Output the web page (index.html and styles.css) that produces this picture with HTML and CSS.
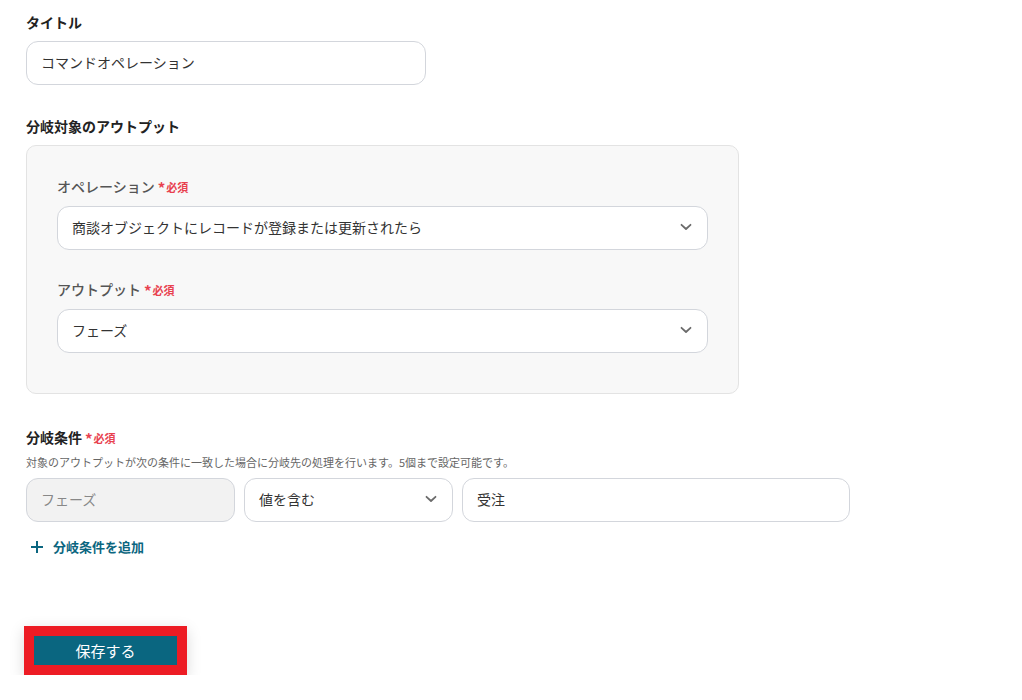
FILE: index.html
```html
<!DOCTYPE html>
<html lang="ja">
<head>
  <meta charset="UTF-8" />
  <meta name="viewport" content="width=device-width, initial-scale=1.0" />
  <title>分岐設定</title>
  <link rel="stylesheet" href="styles.css">
</head>
<body>
  <div class="pagina">
    <div class="campo">
      <label class="rotulo">タイトル</label>
      <div class="caixa titulo">コマンドオペレーション</div>
    </div>

    <div class="campo campo-saida">
      <label class="rotulo">分岐対象のアウトプット</label>
      <div class="painel">
        <div class="campo">
          <label class="rotulo-sub">オペレーション<span class="obrigatorio"><span class="ast">*</span>必須</span></label>
          <div class="caixa seletor">
            <span>商談オブジェクトにレコードが登録または更新されたら</span>
            <svg class="seta" width="12" height="8" viewBox="0 0 12 8"><path d="M1.5 1.8 L6 6 L10.5 1.8" fill="none" stroke="#6b6b6b" stroke-width="1.8" stroke-linecap="round" stroke-linejoin="round"/></svg>
          </div>
        </div>
        <div class="campo campo-saida2">
          <label class="rotulo-sub">アウトプット<span class="obrigatorio"><span class="ast">*</span>必須</span></label>
          <div class="caixa seletor">
            <span>フェーズ</span>
            <svg class="seta" width="12" height="8" viewBox="0 0 12 8"><path d="M1.5 1.8 L6 6 L10.5 1.8" fill="none" stroke="#6b6b6b" stroke-width="1.8" stroke-linecap="round" stroke-linejoin="round"/></svg>
          </div>
        </div>
      </div>
    </div>

    <div class="campo campo-condicao">
      <label class="rotulo">分岐条件<span class="obrigatorio"><span class="ast">*</span>必須</span></label>
      <p class="ajuda">対象のアウトプットが次の条件に一致した場合に分岐先の処理を行います。5個まで設定可能です。</p>
      <div class="linha-condicao">
        <div class="caixa desativado">フェーズ</div>
        <div class="caixa seletor">
          <span>値を含む</span>
          <svg class="seta" width="12" height="8" viewBox="0 0 12 8"><path d="M1.5 1.8 L6 6 L10.5 1.8" fill="none" stroke="#6b6b6b" stroke-width="1.8" stroke-linecap="round" stroke-linejoin="round"/></svg>
        </div>
        <div class="caixa valor">受注</div>
      </div>
      <a class="adicionar" href="#">
        <svg width="14" height="14" viewBox="0 0 14 14"><path d="M7 1 V13 M1 7 H13" stroke="#0b6680" stroke-width="2" fill="none"/></svg>
        分岐条件を追加
      </a>
    </div>

    <div class="rodape">
      <div class="destaque">
        <button class="salvar">保存する</button>
      </div>
    </div>
  </div>
</body>
</html>
```

FILE: styles.css
```css
body {
  margin: 0;
  background: #ffffff;
  font-family: "Noto Sans CJK JP", "Noto Sans", sans-serif;
  color: #333;
}
.pagina {
  padding: 12px 0 0 26px;
}
.campo {
  display: flex;
  flex-direction: column;
}
.rotulo {
  font-size: 14px;
  font-weight: 700;
  line-height: 20px;
  color: #222;
  margin-bottom: 9px;
}
.rotulo-sub {
  font-size: 14px;
  font-weight: 500;
  line-height: 20px;
  color: #555;
  margin-bottom: 9px;
}
.obrigatorio {
  color: #e8414f;
  font-size: 11px;
  font-weight: 700;
  margin-left: 3px;
}
.ast {
  font-size: 15px;
  margin-right: 1px;
  position: relative;
  top: 2px;
}
.caixa {
  box-sizing: border-box;
  height: 44px;
  border: 1px solid #d3d6dc;
  border-radius: 12px;
  background: #fff;
  padding: 0 14px 2px;
  display: flex;
  align-items: center;
  font-size: 14px;
  color: #333;
}
.titulo {
  width: 400px;
}
.campo-saida {
  margin-top: 31px;
}
.painel {
  width: 713px;
  box-sizing: border-box;
  background: #f8f8f8;
  border: 1px solid #e3e3e3;
  border-radius: 10px;
  padding: 30px 30px 40px;
}
.campo-saida2 {
  margin-top: 29px;
}
.seletor {
  justify-content: space-between;
}
.seta {
  margin-right: 1px;
}
.campo-condicao {
  margin-top: 33px;
}
.campo-condicao .rotulo {
  margin-bottom: 0;
}
.ajuda {
  margin: 6px 0 8px;
  font-size: 11px;
  line-height: 16px;
  color: #666;
}
.linha-condicao {
  display: flex;
  gap: 9px;
}
.desativado {
  width: 209px;
  background: #f2f2f2;
  color: #888;
}
.linha-condicao .seletor {
  width: 209px;
}
.valor {
  width: 388px;
}
.adicionar {
  display: flex;
  align-items: center;
  gap: 9px;
  margin-top: 15px;
  margin-left: 4px;
  font-size: 13px;
  font-weight: 700;
  color: #0b6680;
  text-decoration: none;
}
.rodape {
  margin-top: 70px;
  margin-left: -2px;
}
.destaque {
  display: inline-block;
  background: #ed1c24;
  padding: 10px;
  box-shadow: 0 4px 14px rgba(0, 0, 0, 0.15);
}
.salvar {
  display: block;
  width: 143px;
  height: 29px;
  border: none;
  background: #0a6680;
  color: #fff;
  font-family: inherit;
  font-size: 15px;
  cursor: pointer;
}
```
